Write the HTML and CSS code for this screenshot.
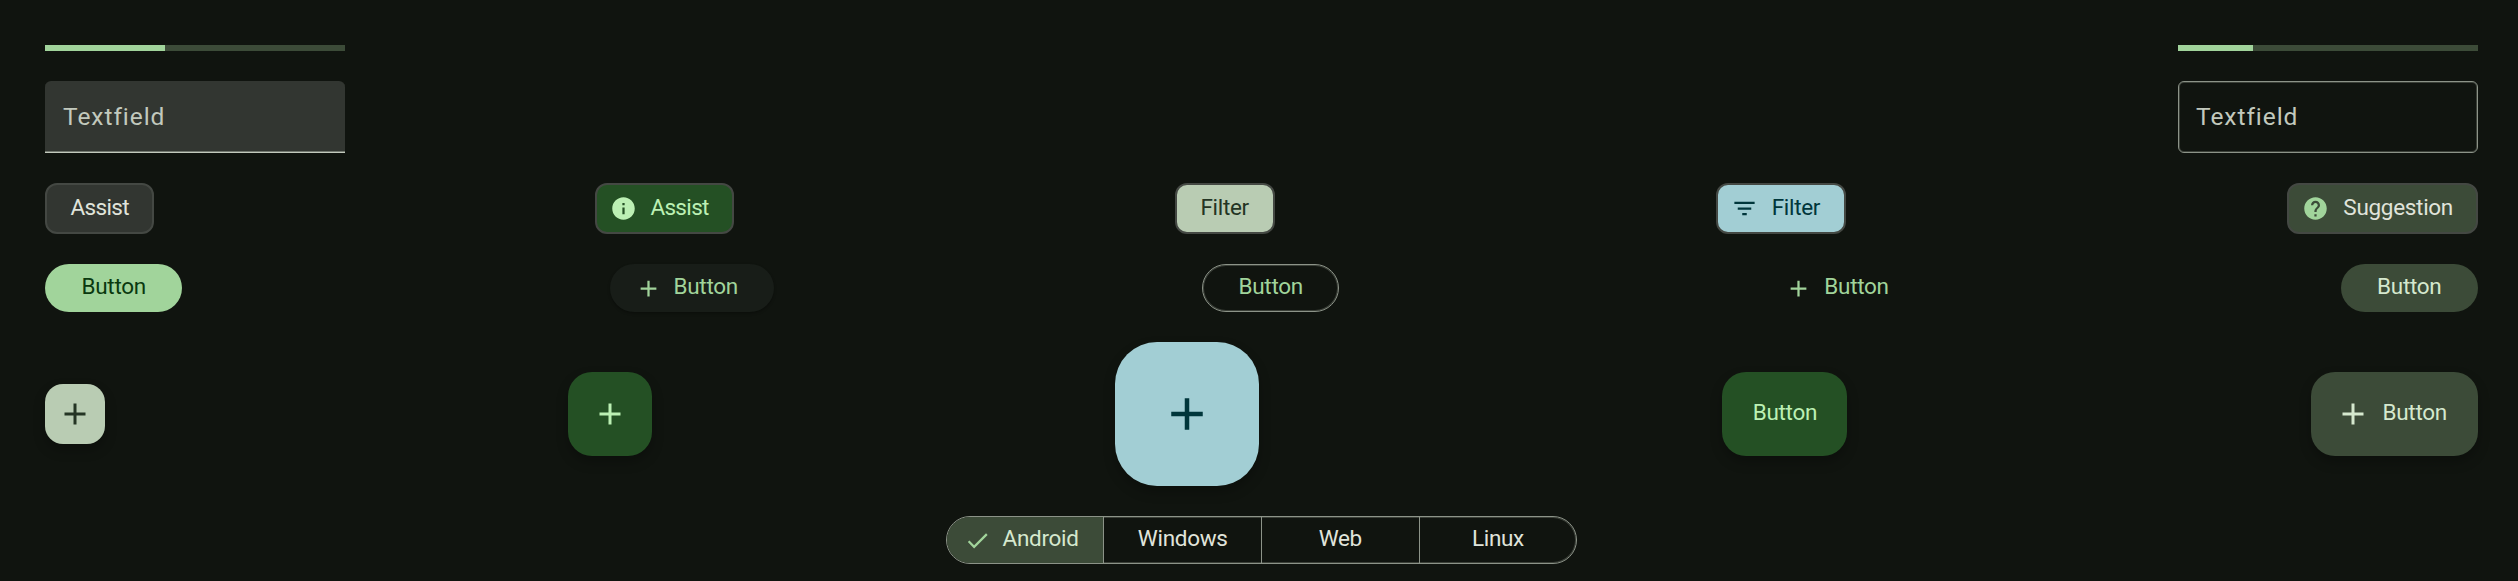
FILE: index.html
```html
<!DOCTYPE html>
<html lang="en">
<head>
<meta charset="utf-8">
<title>Components</title>
<link rel="stylesheet" href="styles.css">
</head>
<body>
<svg class="defs" width="0" height="0">
  <symbol id="add" viewBox="0 0 24 24"><path d="M19 13h-6v6h-2v-6H5v-2h6V5h2v6h6z"/></symbol>
  <symbol id="info" viewBox="0 0 24 24"><path d="M12 2C6.48 2 2 6.48 2 12s4.48 10 10 10 10-4.48 10-10S17.52 2 12 2zm1 15h-2v-6h2v6zm0-8h-2V7h2v2z"/></symbol>
  <symbol id="filter" viewBox="0 0 24 24"><path d="M10 18h4v-2h-4v2zM3 6v2h18V6H3zm3 7h12v-2H6v2z"/></symbol>
  <symbol id="help" viewBox="0 0 24 24"><path d="M12 2C6.48 2 2 6.48 2 12s4.48 10 10 10 10-4.48 10-10S17.52 2 12 2zm1 17h-2v-2h2v2zm2.07-7.75l-.9.92C13.45 12.9 13 13.5 13 15h-2v-.5c0-1.1.45-2.1 1.17-2.83l1.24-1.26c.37-.36.59-.86.59-1.41 0-1.1-.9-2-2-2s-2 .9-2 2H8c0-2.21 1.79-4 4-4s4 1.79 4 4c0 .88-.36 1.68-.93 2.25z"/></symbol>
  <symbol id="check" viewBox="0 0 24 24"><path d="M9 16.17L4.83 12l-1.42 1.41L9 19 21 7l-1.41-1.41z"/></symbol>
</svg>
<main class="page">
  <div class="row">
    <div class="progress"><div class="bar" style="width:40%"></div></div>
    <div class="progress"><div class="bar" style="width:25%"></div></div>
  </div>
  <div class="row">
    <div class="field filled"><span>Textfield</span></div>
    <div class="field outlined"><span>Textfield</span></div>
  </div>
  <div class="row">
    <div class="chip assist"><span>Assist</span></div>
    <div class="chip assist-icon"><svg><use href="#info"/></svg><span>Assist</span></div>
    <div class="chip filter"><span>Filter</span></div>
    <div class="chip filter-icon"><svg><use href="#filter"/></svg><span>Filter</span></div>
    <div class="chip suggestion"><svg><use href="#help"/></svg><span>Suggestion</span></div>
  </div>
  <div class="row">
    <div class="button primary"><span>Button</span></div>
    <div class="button elevated"><svg><use href="#add"/></svg><span>Button</span></div>
    <div class="button outline"><span>Button</span></div>
    <div class="button text"><svg><use href="#add"/></svg><span>Button</span></div>
    <div class="button tonal"><span>Button</span></div>
  </div>
  <div class="row fabs">
    <div class="fab small"><svg><use href="#add"/></svg></div>
    <div class="fab medium"><svg><use href="#add"/></svg></div>
    <div class="fab large"><svg><use href="#add"/></svg></div>
    <div class="fab label"><span>Button</span></div>
    <div class="fab extended"><svg><use href="#add"/></svg><span>Button</span></div>
  </div>
  <div class="segments">
    <div class="segment selected"><svg><use href="#check"/></svg><span>Android</span></div>
    <div class="segment"><span>Windows</span></div>
    <div class="segment"><span>Web</span></div>
    <div class="segment"><span>Linux</span></div>
  </div>
</main>
</body>
</html>
```
FILE: styles.css
```css
* { box-sizing: border-box; }
body {
  margin: 0;
  background: #10140f;
  color: #e0e4db;
  font: 400 22.5px/30px Roboto, sans-serif;
  letter-spacing: -.3px;
  overflow: hidden;
}
.defs { display: block; }
svg { fill: currentColor; flex: none; }
.page {
  display: flex;
  flex-direction: column;
  gap: 30px;
  height: 581px;
  padding: 45px 40px 0 45px;
}
.row { display: flex; justify-content: space-between; width: 2433px; }
.fabs { align-items: center; }
.progress { width: 300px; height: 6px; background: #3c4b38; }
.bar { height: 6px; background: #a1d49b; }
.field {
  display: flex;
  align-items: center;
  width: 300px;
  height: 72px;
  color: #c2c9bd;
  font-size: 24.5px;
  letter-spacing: .95px;
}
.filled {
  padding: 0 18px;
  background: #323631;
  border-radius: 6px 6px 0 0;
  border-bottom: 1px solid #c2c9bd;
  box-shadow: inset 0 -1px rgba(194,201,189,.45);
}
.outlined {
  padding: 0 17px;
  border: 1px solid #8c9388;
  border-radius: 6px;
  box-shadow: inset 0 0 0 1px rgba(140,147,136,.35);
}
.chip {
  display: flex;
  align-items: center;
  justify-content: flex-end;
  height: 51px;
  padding: 0 23px 4px;
  border: 2px solid #444843;
  border-radius: 12px;
}
.chip svg { width: 27px; height: 27px; margin: 4px auto 0 -10px; }
.assist { width: 109px; background: #323631; }
.assist-icon { width: 139px; background: #245024; color: #bcf0b4; }
.assist, .assist-icon { letter-spacing: -.65px; }
.filter { width: 100.3px; background: #b9ccb3; color: #243424; }
.filter-icon { width: 130.4px; background: #a2ced4; color: #00363b; }
.filter, .filter-icon { padding-right: 24px; }
.suggestion { width: 191px; background: #3c4b38; }
.suggestion svg { color: #a1d49b; }
.button {
  display: flex;
  align-items: center;
  justify-content: center;
  width: 137.4px;
  height: 48px;
  padding-bottom: 4px;
  border-radius: 24px;
  color: #a1d49b;
}
.button svg { width: 27px; height: 27px; margin: 5px 12px 0 0; }
.primary { background: #a1d49b; color: #0a390f; }
.elevated {
  width: 164.5px;
  padding-right: 12px;
  background: #181d18;
  box-shadow: 0 1.5px 3px rgba(0,0,0,.3);
}
.outline { border: 1px solid #8c9388; box-shadow: inset 0 0 0 1px rgba(140,147,136,.35); }
.text { width: 146px; padding-right: 6px; }
.tonal { background: #3c4b38; color: #d5e8ce; }
.fab {
  display: flex;
  align-items: center;
  justify-content: center;
  border-radius: 24px;
  box-shadow: 0 6px 12px rgba(0,0,0,.25);
}
.fab span { padding-bottom: 4px; }
.fab svg { width: 36px; height: 36px; }
.small { width: 60px; height: 60px; border-radius: 18px; background: #b9ccb3; color: #243424; }
.medium { width: 84px; height: 84px; background: #245024; color: #bcf0b4; }
.large { width: 144px; height: 144px; border-radius: 42px; background: #a2ced4; color: #00363b; }
.fab.large svg { width: 54px; height: 54px; }
.label { width: 125px; height: 84px; background: #245024; color: #bcf0b4; }
.extended {
  width: 167.5px;
  height: 84px;
  padding-right: 7px;
  gap: 12px;
  background: #3c4b38;
  color: #d5e8ce;
}
.segments {
  display: flex;
  align-self: center;
  width: 631.5px;
  height: 48px;
  border: 1px solid #8c9388;
  border-radius: 24px;
  box-shadow: inset 0 0 0 1px rgba(140,147,136,.35);
  overflow: hidden;
}
.segment {
  display: flex;
  align-items: center;
  justify-content: center;
  width: 158px;
  padding-bottom: 4px;
}
.segment + .segment { border-left: 1px solid #8c9388; }
.segment.selected {
  width: 157px;
  padding-right: 8px;
  gap: 12px;
  background: #3c4b38;
  color: #d5e8ce;
}
.selected svg { width: 27px; height: 27px; margin-top: 5px; color: #a1d49b; }
```
